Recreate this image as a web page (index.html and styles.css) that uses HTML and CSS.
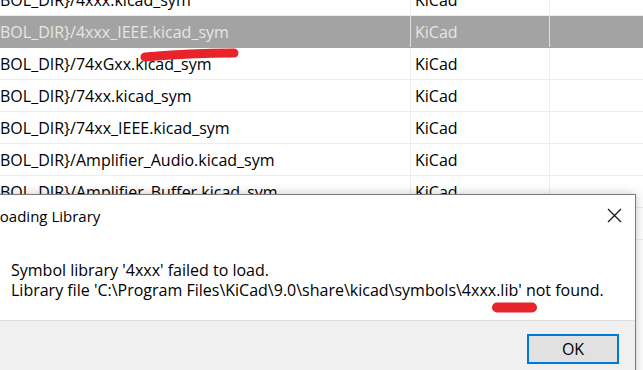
FILE: index.html
```html
<!DOCTYPE html>
<html>
<head>
<meta charset="utf-8">
<link rel="stylesheet" href="styles.css">
</head>
<body>
<div class="screen">
  <div class="table">
    <div class="row"><div class="cell path">BOL_DIR}/4xxx.kicad_sym</div><div class="cell type">KiCad</div><div class="cell rest"></div></div>
    <div class="row selected"><div class="cell path">BOL_DIR}/4xxx_IEEE.kicad_sym</div><div class="cell type">KiCad</div><div class="cell rest"></div></div>
    <div class="row"><div class="cell path">BOL_DIR}/74xGxx.kicad_sym</div><div class="cell type">KiCad</div><div class="cell rest"></div></div>
    <div class="row"><div class="cell path">BOL_DIR}/74xx.kicad_sym</div><div class="cell type">KiCad</div><div class="cell rest"></div></div>
    <div class="row"><div class="cell path">BOL_DIR}/74xx_IEEE.kicad_sym</div><div class="cell type">KiCad</div><div class="cell rest"></div></div>
    <div class="row"><div class="cell path">BOL_DIR}/Amplifier_Audio.kicad_sym</div><div class="cell type">KiCad</div><div class="cell rest"></div></div>
    <div class="row"><div class="cell path">BOL_DIR}/Amplifier_Buffer.kicad_sym</div><div class="cell type">KiCad</div><div class="cell rest"></div></div>
    <div class="row"><div class="cell path">BOL_DIR}/Amplifier_Current.kicad_sym</div><div class="cell type">KiCad</div><div class="cell rest"></div></div>
  </div>

  <div class="dialog">
    <div class="titlebar">
      <span class="title">Loading Library</span>
      <svg class="close" width="15" height="15" viewBox="0 0 15 15"><path d="M1 1 L14 14 M14 1 L1 14" stroke="#1a1a1a" stroke-width="1.3" fill="none"/></svg>
    </div>
    <div class="message">
      <div>Symbol library '4xxx' failed to load.</div>
      <div>Library file 'C:\Program Files\KiCad\9.0\share\kicad\symbols\4xxx.lib' not found.</div>
    </div>
    <div class="footer">
      <button class="ok">OK</button>
    </div>
  </div>

  <svg class="marks" width="643" height="370" viewBox="0 0 643 370">
    <path d="M145 57 Q190 53 234 53" stroke="#e8232a" stroke-width="9" stroke-linecap="round" fill="none"/>
    <path d="M497 307.5 L532 307.5" stroke="#e8232a" stroke-width="10" stroke-linecap="round" fill="none"/>
  </svg>
</div>
</body>
</html>
```

FILE: styles.css
```css
html, body {
  margin: 0;
  padding: 0;
  background: #ffffff;
}
.screen {
  position: relative;
  width: 643px;
  height: 370px;
  overflow: hidden;
  font-family: "Open Sans", "Noto Sans", sans-serif;
  font-size: 16px;
  color: #000;
}
.table {
  margin-top: -16px;
  display: flex;
  flex-direction: column;
}
.row {
  display: grid;
  grid-template-columns: 411px 139px 1fr;
  height: 32px;
  box-sizing: border-box;
  border-bottom: 1px solid #eeeeee;
}
.cell {
  display: flex;
  align-items: center;
  white-space: nowrap;
  overflow: hidden;
  box-sizing: border-box;
}
.path {
  border-right: 1px solid #eeeeee;
  padding-left: 0;
}
.type {
  border-right: 1px solid #eeeeee;
  padding-left: 4px;
}
.row.selected {
  background: #a3a3a3;
  color: #e6e6e6;
  border-bottom-color: #a3a3a3;
}
.row.selected .path,
.row.selected .type {
  border-right-color: #dddddd;
}
.dialog {
  position: absolute;
  left: -30px;
  top: 194px;
  width: 666px;
  height: 220px;
  box-sizing: border-box;
  border: 1px solid #7a7a7a;
  background: #ffffff;
  box-shadow: 0 0 10px rgba(0, 0, 0, 0.22);
  display: flex;
  flex-direction: column;
}
.titlebar {
  height: 41px;
  display: flex;
  align-items: center;
  justify-content: space-between;
  padding-left: 21px;
  padding-right: 13px;
}
.title {
  font-size: 15px;
}
.message {
  padding: 24px 0 20px 40px;
  line-height: 20px;
}
.footer {
  flex: 1;
  background: #f0f0f0;
  border-top: 1px solid #dfdfdf;
  display: flex;
  justify-content: flex-end;
  align-items: flex-start;
  padding-top: 13px;
  padding-right: 16px;
}
.ok {
  width: 92px;
  height: 30px;
  box-sizing: border-box;
  border: 2px solid #0078d7;
  background: #e1e1e1;
  font-family: inherit;
  font-size: 16px;
  color: #000;
  padding: 0;
}
.marks {
  position: absolute;
  left: 0;
  top: 0;
  pointer-events: none;
}
```
